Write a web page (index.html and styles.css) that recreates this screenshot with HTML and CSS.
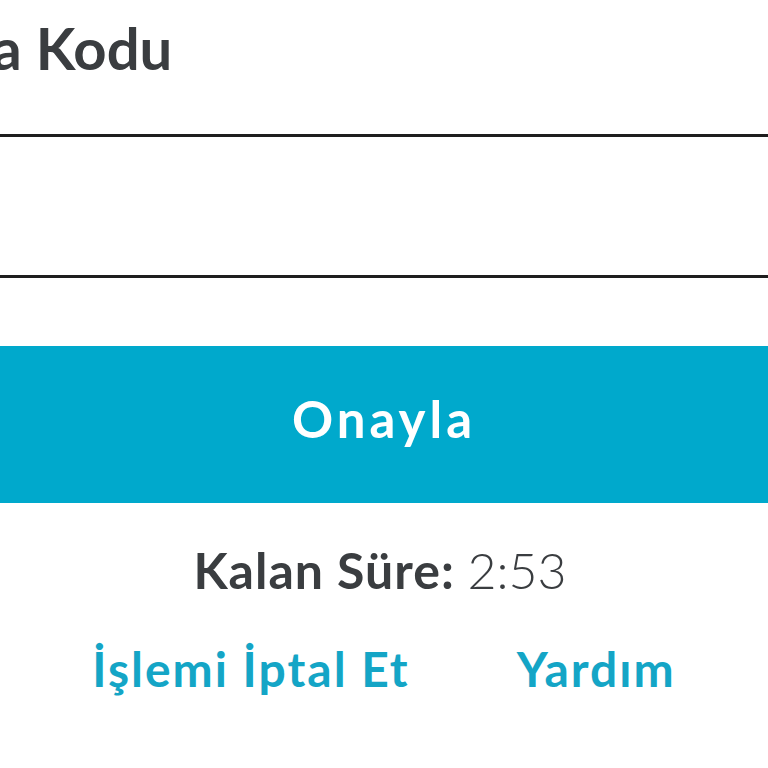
FILE: index.html
```html
<!DOCTYPE html>
<html lang="tr">
  <head>
    <meta charset="UTF-8" />
    <meta name="viewport" content="width=device-width, initial-scale=1.0" />
    <title>Doğrulama</title>
    <link rel="stylesheet" href="styles.css">
  </head>
  <body>
    <div class="page">
      <form class="verify-form">
        <label class="code-label" for="code">Doğrulama Kodu</label>
        <input class="code-input" id="code" type="text" inputmode="numeric" />
        <button class="confirm-btn" type="button">Onayla</button>
      </form>

      <p class="timer"><span class="timer-label">Kalan Süre:</span> <span class="timer-value">2:53</span></p>

      <div class="links">
        <a href="#">İşlemi İptal Et</a>
        <a href="#">Yardım</a>
      </div>
    </div>
  </body>
</html>
```

FILE: styles.css
```css
html, body {
  margin: 0;
  padding: 0;
  background-color: #fff;
  overflow: hidden;
}
body {
  font-family: Lato, "Open Sans", sans-serif;
  color: #3a3d40;
}
.page {
  width: 900px;
  margin-left: -66px;
}
.verify-form {
  display: flex;
  flex-direction: column;
}
.code-label {
  display: block;
  font-size: 58px;
  font-weight: 700;
  line-height: 1;
  margin: 19px 0 0 -196px;
  color: #3a3d40;
}
.code-input {
  box-sizing: border-box;
  height: 144px;
  margin-top: 57px;
  border: 3px solid #1e1e1e;
  background: #fff;
  outline: none;
}
.confirm-btn {
  height: 157px;
  margin-top: 68px;
  padding: 0 0 12px;
  border: none;
  background-color: #00a9cc;
  color: #fff;
  font-family: inherit;
  font-size: 51px;
  font-weight: 700;
  letter-spacing: 4px;
}
.timer {
  margin: 37px 0 0;
  padding-right: 8px;
  text-align: center;
  font-size: 50px;
  line-height: 1.2;
}
.timer-label {
  font-weight: 700;
  letter-spacing: 1px;
}
.timer-value {
  font-weight: 300;
}
.links {
  display: flex;
  justify-content: center;
  gap: 107px;
  margin-top: 40px;
}
.links a {
  color: #14a5c6;
  font-size: 48px;
  font-weight: 700;
  letter-spacing: 2px;
  text-decoration: none;
}
```
